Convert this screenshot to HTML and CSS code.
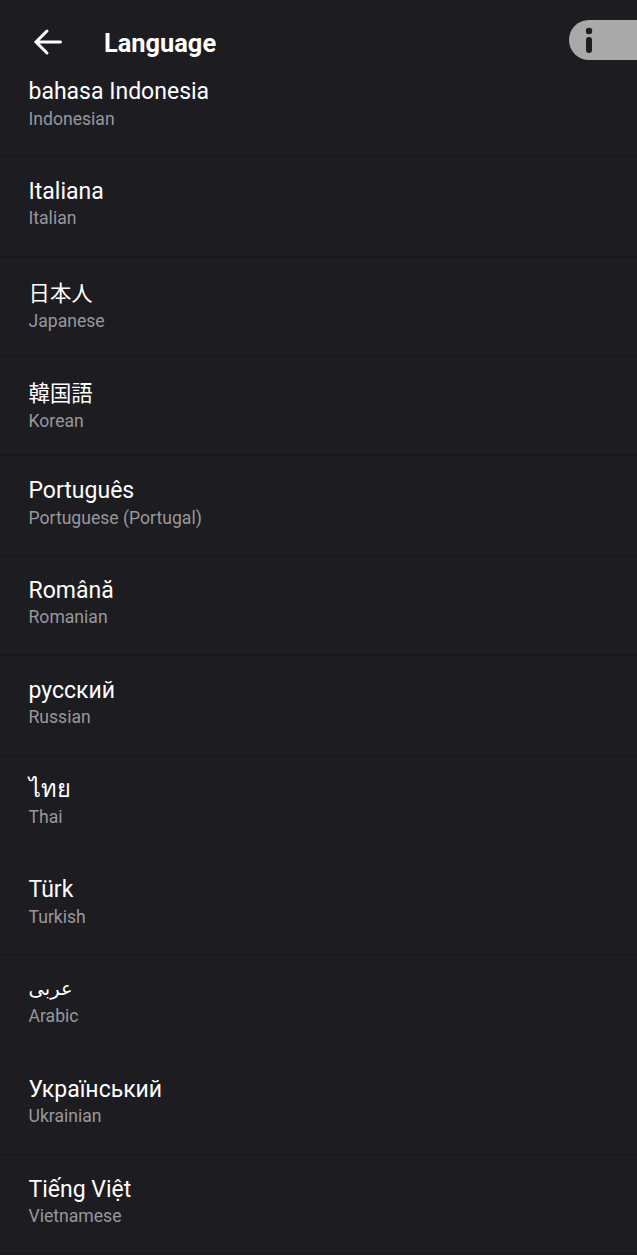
FILE: index.html
```html
<!DOCTYPE html>
<html lang="en">
<head>
<meta charset="utf-8">
<title>Language</title>
<link rel="stylesheet" href="styles.css">
</head>
<body>
<div class="screen">
  <header class="topbar">
    <svg class="back" width="30" height="28" viewBox="0 0 30 28" aria-hidden="true"><path d="M27.500 14H3.500M14 3 3 14l11 11" fill="none" stroke="#fff" stroke-width="3" stroke-linecap="round"/></svg>
    <h1 class="title">Language</h1>
    <div class="info"><svg width="10" height="26" viewBox="0 0 10 26" aria-hidden="true"><circle cx="5" cy="4" r="3.200" fill="#1c1c21"/><rect x="2" y="10" width="6" height="16" rx="3" fill="#1c1c21"/></svg></div>
  </header>
  <ul class="list">
    <li class="row"><span class="name">bahasa Indonesia</span><span class="sub">Indonesian</span></li>
    <li class="row"><span class="name">Italiana</span><span class="sub">Italian</span></li>
    <li class="row row-cjk"><span class="name">日本人</span><span class="sub">Japanese</span></li>
    <li class="row row-cjk"><span class="name">韓国語</span><span class="sub">Korean</span></li>
    <li class="row"><span class="name">Português</span><span class="sub">Portuguese (Portugal)</span></li>
    <li class="row"><span class="name">Română</span><span class="sub">Romanian</span></li>
    <li class="row"><span class="name">русский</span><span class="sub">Russian</span></li>
    <li class="row row-thai"><span class="name">ไทย</span><span class="sub">Thai</span></li>
    <li class="row"><span class="name">Türk</span><span class="sub">Turkish</span></li>
    <li class="row row-arabic"><span class="name">عربى</span><span class="sub">Arabic</span></li>
    <li class="row"><span class="name">Український</span><span class="sub">Ukrainian</span></li>
    <li class="row"><span class="name">Tiếng Việt</span><span class="sub">Vietnamese</span></li>
  </ul>
</div>
</body>
</html>
```
FILE: styles.css
```css
* { box-sizing: border-box; }
html, body { margin: 0; height: 100%; background: #1c1c21; }
body { font-family: Roboto, "Noto Sans CJK JP", "DejaVu Sans", sans-serif; overflow: hidden; }
.screen { height: 1255px; overflow: hidden; }
.topbar { position: relative; z-index: 2; height: 80px; display: flex; align-items: center; padding-left: 33px; background: #1c1c21; border-bottom: 1px solid #19191e; }
.back { flex: none; margin-top: 5px; }
.title { margin: 0 0 0 41px; font-size: 25.400px; line-height: 32px; font-weight: 700; color: #fff; padding-top: 6px; }
.info { position: absolute; left: 569px; top: 20px; width: 68px; height: 40px; padding: 7px 0 0 15px; background: #a9a9a9; border-radius: 20px 0 0 20px; }
.list { list-style: none; margin: -22.750px 0 0; padding: 0; }
.row { height: 99.750px; padding: 20px 28.500px 0; display: flex; flex-direction: column; border-bottom: 1px solid #17171c; }
.name { color: #fff; font-size: 23px; line-height: 30px; height: 29.300px; white-space: nowrap; }
.sub { color: #98989c; font-size: 17.600px; line-height: 24px; }
.row-cjk .name { font-size: 21.400px; line-height: 33px; height: 32.500px; }
.row-thai .name { font-size: 23.600px; line-height: 26px; }
.row-arabic .name { font-size: 19.500px; line-height: 28px; }
```
